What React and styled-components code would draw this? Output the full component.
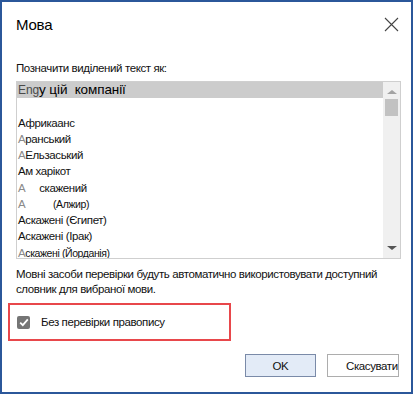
import React from "react";
import styled, { createGlobalStyle } from "styled-components";

const GlobalStyle = createGlobalStyle`
  html, body {
    margin: 0;
    padding: 0;
    background: #ffffff;
  }
  body {
    font-family: "Liberation Sans", Arial, sans-serif;
  }
`;

/* DIALOG FRAME */
const Dialog = styled.div`
  box-sizing: border-box;
  width: 413px;
  height: 394px;
  border: 2px solid #2b579a;
  background: #ffffff;
  display: flex;
  flex-direction: column;
  padding: 0 12px 0 14px;
  color: #1a1a1a;
  letter-spacing: -0.4px;
`;

/* HEADER */
const Header = styled.div`
  display: flex;
  align-items: center;
  justify-content: space-between;
  height: 44px;
`;

const Title = styled.div`
  font-size: 15px;
  letter-spacing: -0.2px;
  color: #000;
`;

const CloseButton = styled.button`
  border: none;
  background: transparent;
  padding: 0;
  width: 16px;
  height: 16px;
  display: flex;
  align-items: center;
  justify-content: center;
  cursor: pointer;
`;

const Label = styled.div`
  font-size: 11.5px;
  margin-top: 16px;
  color: #111;
`;

/* LISTBOX */
const ListBox = styled.div`
  box-sizing: border-box;
  margin-top: 7px;
  width: 385px;
  height: 178px;
  border: 1px solid #cfcfcf;
  display: flex;
  overflow: hidden;
`;

const ListArea = styled.div`
  flex: 1;
  display: flex;
  flex-direction: column;
  overflow: hidden;
`;

const SelectedRow = styled.div`
  height: 16px;
  background: #cccccc;
  font-size: 13.5px;
  letter-spacing: -0.1px;
  line-height: 16px;
  padding-left: 1px;
  color: #000;
  white-space: pre;
`;

const Faint = styled.span`
  color: #4a4a4a;
  font-size: 12px;
`;

const Separator = styled.div`
  margin-top: 8px;
  height: 1px;
  background: #6e6e6e;
`;

const Items = styled.div`
  margin-top: 8.5px;
  display: flex;
  flex-direction: column;
`;

const Item = styled.div`
  height: 16.25px;
  line-height: 16.25px;
  font-size: ${(p) => (p.$small ? "10.5px" : "11.5px")};
  color: #111;
  white-space: pre;
  padding-left: 1px;
`;

const Glyph = styled.span`
  color: ${(p) => (p.$light ? "#8a8a8a" : "#111")};
  font-size: 11.5px;
`;

/* SCROLLBAR */
const ScrollBar = styled.div`
  width: 17px;
  background: #f0f0f0;
  display: flex;
  flex-direction: column;
  align-items: center;
`;

const Arrow = styled.div`
  width: 0;
  height: 0;
  border-left: 5px solid transparent;
  border-right: 5px solid transparent;
  ${(p) =>
    p.$up
      ? "border-bottom: 4px solid #a3a3a3; margin-top: 8px;"
      : "border-top: 4px solid #555555; margin-bottom: 8px;"}
`;

const Thumb = styled.div`
  width: 13px;
  height: 17px;
  background: #c2c2c2;
  margin-top: 5px;
`;

const Spacer = styled.div`
  flex: 1;
`;

const Note = styled.div`
  margin-top: 8px;
  font-size: 11.5px;
  line-height: 15px;
  color: #111;
  white-space: nowrap;
`;

/* CHECKBOX GROUP */
const Highlight = styled.div`
  box-sizing: border-box;
  margin-top: 6px;
  margin-left: -8px;
  width: 223px;
  height: 38px;
  border: 2px solid #e8474b;
  display: flex;
  align-items: center;
  padding-left: 7px;
  gap: 11px;
`;

const Check = styled.div`
  width: 13px;
  height: 13px;
  border-radius: 2px;
  background: #757575;
  display: flex;
  align-items: center;
  justify-content: center;
`;

const CheckLabel = styled.div`
  font-size: 11.5px;
  color: #111;
`;

/* FOOTER */
const Footer = styled.div`
  display: flex;
  justify-content: flex-end;
  gap: 11px;
  margin-top: 13px;
`;

const Button = styled.button`
  box-sizing: border-box;
  height: 23px;
  width: ${(p) => (p.$primary ? "71px" : "72px")};
  border: 1px solid ${(p) => (p.$primary ? "#7a8aa8" : "#adadad")};
  background: ${(p) => (p.$primary ? "#e3ebf7" : "#ffffff")};
  font-family: "Liberation Sans", Arial, sans-serif;
  font-size: 11.5px;
  letter-spacing: -0.4px;
  color: #111;
  padding: ${(p) => (p.$primary ? "0" : "0 0 0 18px")};
  text-align: ${(p) => (p.$primary ? "center" : "left")};
  white-space: nowrap;
  overflow: hidden;
`;

const App = () => {
  return (
    <>
      <GlobalStyle />
      <Dialog>
        <Header>
          <Title>Мова</Title>
          <CloseButton aria-label="Закрити">
            <svg width="15" height="15" viewBox="0 0 15 15">
              <path
                d="M1 1 L14 14 M14 1 L1 14"
                stroke="#444"
                strokeWidth="1.1"
                fill="none"
              />
            </svg>
          </CloseButton>
        </Header>

        <Label>Позначити виділений текст як:</Label>

        <ListBox>
          <ListArea>
            <SelectedRow>
              <Faint>Eng</Faint>у цій  компанії
            </SelectedRow>
            <Separator />
            <Items>
              <Item>Африкаанс</Item>
              <Item>
                <Glyph $light>А</Glyph>ранський
              </Item>
              <Item>
                <Glyph $light>А</Glyph>Ельзаський
              </Item>
              <Item>
                <Glyph>А</Glyph>м харікот
              </Item>
              <Item>
                <Glyph $light>А</Glyph>     скажений
              </Item>
              <Item $small>
                <Glyph $light>А</Glyph>           (Алжир)
              </Item>
              <Item>
                <Glyph>А</Glyph>скажені (Єгипет)
              </Item>
              <Item>
                <Glyph>А</Glyph>скажені (Ірак)
              </Item>
              <Item $small>
                <Glyph $light>А</Glyph>скажені (Йорданія)
              </Item>
            </Items>
          </ListArea>
          <ScrollBar>
            <Arrow $up />
            <Thumb />
            <Spacer />
            <Arrow />
          </ScrollBar>
        </ListBox>

        <Note>
          Мовні засоби перевірки будуть автоматично використовувати доступний
          <br />
          словник для вибраної мови.
        </Note>

        <Highlight>
          <Check>
            <svg width="10" height="9" viewBox="0 0 10 9">
              <path
                d="M1.2 4.6 L3.8 7.2 L8.8 1.4"
                stroke="#ffffff"
                strokeWidth="1.8"
                fill="none"
              />
            </svg>
          </Check>
          <CheckLabel>Без перевірки правопису</CheckLabel>
        </Highlight>

        <Footer>
          <Button $primary>OK</Button>
          <Button>Скасувати</Button>
        </Footer>
      </Dialog>
    </>
  );
};

export default App;
